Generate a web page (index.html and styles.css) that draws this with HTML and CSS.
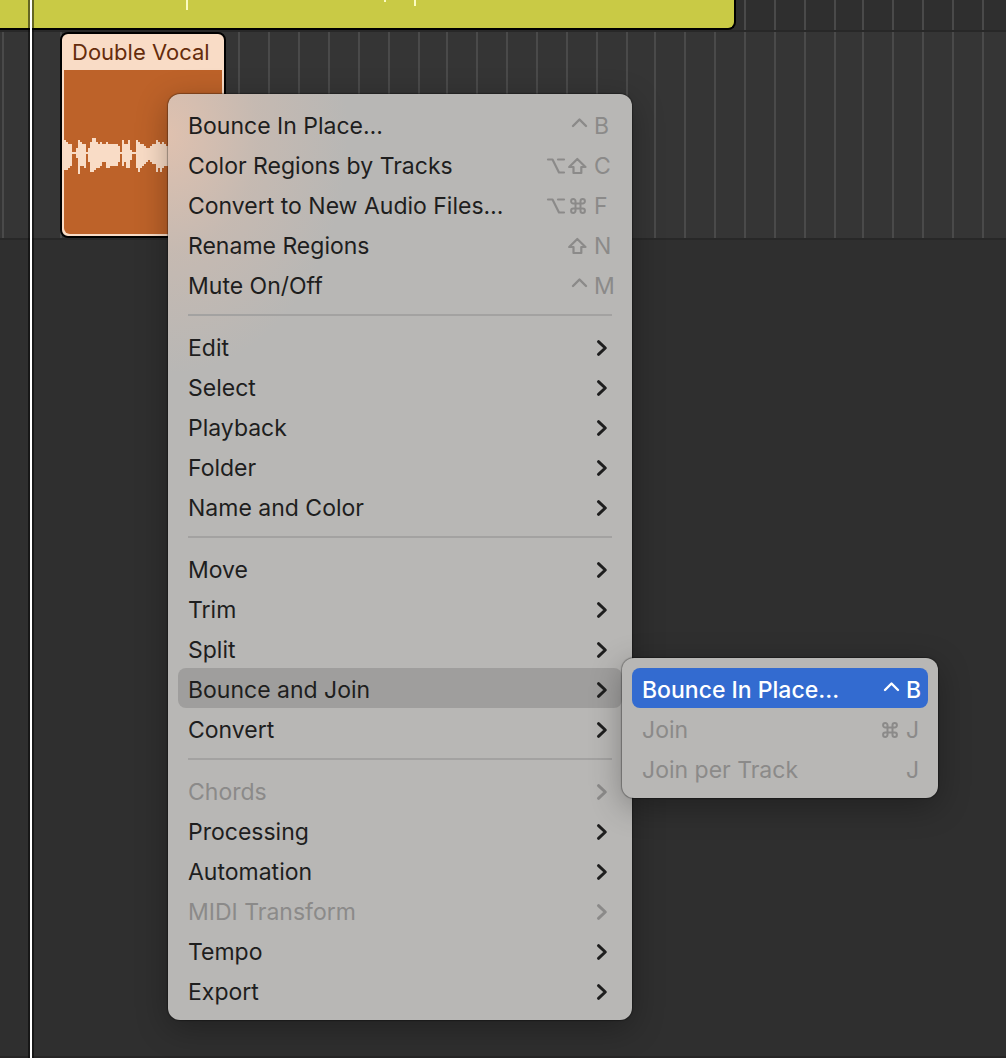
FILE: index.html
```html
<!DOCTYPE html>
<html lang="en">
<head>
<meta charset="utf-8">
<title>Tracks</title>
<link rel="stylesheet" href="styles.css">
</head>
<body>
<svg class="defs" aria-hidden="true">
  <symbol id="chevron" viewBox="0 0 20 20"><path d="M6.500 3.700l6.800 6.300-6.800 6.300" stroke-width="3"/></symbol>
  <symbol id="control" viewBox="0 0 20 20"><path d="M5 10l6.500-6.500 6.500 6.500" stroke-width="2.400"/></symbol>
  <symbol id="option" viewBox="0 0 20 20"><path d="M2 3.500h4.500l6.500 13H18M12 3.500h6" stroke-width="2.200"/></symbol>
  <symbol id="shift" viewBox="0 0 20 20"><path d="M9.300 3L1.200 11H5.500v6h7.800v-6h4.200z" stroke-width="2.200"/></symbol>
  <symbol id="command" viewBox="0 0 20 20"><path d="M7.500 7.500h5v5h-5zM7.500 7.500H5.300a2.200 2.200 0 1 1 2.200-2.200zM12.500 7.500V5.300a2.200 2.200 0 1 1 2.200 2.200zM12.500 12.500h2.200a2.200 2.200 0 1 1-2.200 2.200zM7.500 12.500v2.200a2.200 2.200 0 1 1-2.200-2.200z"/></symbol>
</svg>

<main class="arrange">
  <section class="lane lane-top">
    <div class="region region-yellow">
      <svg class="peaks" width="734" height="12" aria-hidden="true"><path d="M187 0V10M385 0V2M415 0V6"/></svg>
    </div>
  </section>
  <section class="lane lane-vocal">
    <div class="region region-vocal">
      <h2 class="region-name">Double Vocal</h2>
      <div class="region-body">
        <svg class="wave" viewBox="0 0 158 44" aria-hidden="true"><path d="M1 6V36M3 8V36M5 10V34M7 10V32M9 18V20M11 18V20M13 14V24M15 6V40M17 8V32M19 10V32M21 10V34M23 18V20M25 14V28M27 8V38M29 4V38M31 4V36M33 8V34M35 10V34M37 8V32M39 10V28M41 10V28M43 8V34M45 10V34M47 10V32M49 10V32M51 10V32M53 10V32M55 12V28M57 18V20M59 6V32M61 10V28M63 10V34M65 6V34M67 16V26M69 18V20M71 18V20M73 6V34M75 8V38M77 10V34M79 10V32M81 12V30M83 14V28M85 14V26M87 12V28M89 10V30M91 10V30M93 6V38M95 8V34M97 10V38M99 8V34M101 10V32M103 12V32"/></svg>
      </div>
    </div>
  </section>
  <section class="empty"></section>
  <div class="playhead"></div>
</main>

<ul class="menu context" role="menu">
  <li><button class="item">Bounce In Place…<span class="keys"><svg><use href="#control"/></svg><kbd>B</kbd></span></button></li>
  <li><button class="item">Color Regions by Tracks<span class="keys"><svg><use href="#option"/></svg><svg><use href="#shift"/></svg><kbd>C</kbd></span></button></li>
  <li><button class="item">Convert to New Audio Files…<span class="keys"><svg><use href="#option"/></svg><svg><use href="#command"/></svg><kbd>F</kbd></span></button></li>
  <li><button class="item">Rename Regions<span class="keys"><svg><use href="#shift"/></svg><kbd>N</kbd></span></button></li>
  <li><button class="item">Mute On/Off<span class="keys"><svg><use href="#control"/></svg><kbd>M</kbd></span></button></li>
  <li class="separator" role="separator"></li>
  <li><button class="item">Edit<svg><use href="#chevron"/></svg></button></li>
  <li><button class="item">Select<svg><use href="#chevron"/></svg></button></li>
  <li><button class="item">Playback<svg><use href="#chevron"/></svg></button></li>
  <li><button class="item">Folder<svg><use href="#chevron"/></svg></button></li>
  <li><button class="item">Name and Color<svg><use href="#chevron"/></svg></button></li>
  <li class="separator" role="separator"></li>
  <li><button class="item">Move<svg><use href="#chevron"/></svg></button></li>
  <li><button class="item">Trim<svg><use href="#chevron"/></svg></button></li>
  <li><button class="item">Split<svg><use href="#chevron"/></svg></button></li>
  <li class="parent">
    <button class="item open" aria-expanded="true">Bounce and Join<svg><use href="#chevron"/></svg></button>
    <ul class="menu submenu" role="menu">
      <li><button class="item selected">Bounce In Place…<span class="keys"><svg><use href="#control"/></svg><kbd>B</kbd></span></button></li>
      <li><button class="item" disabled>Join<span class="keys"><svg><use href="#command"/></svg><kbd>J</kbd></span></button></li>
      <li><button class="item" disabled>Join per Track<span class="keys"><kbd>J</kbd></span></button></li>
    </ul>
  </li>
  <li><button class="item">Convert<svg><use href="#chevron"/></svg></button></li>
  <li class="separator" role="separator"></li>
  <li><button class="item" disabled>Chords<svg><use href="#chevron"/></svg></button></li>
  <li><button class="item">Processing<svg><use href="#chevron"/></svg></button></li>
  <li><button class="item">Automation<svg><use href="#chevron"/></svg></button></li>
  <li><button class="item" disabled>MIDI Transform<svg><use href="#chevron"/></svg></button></li>
  <li><button class="item">Tempo<svg><use href="#chevron"/></svg></button></li>
  <li><button class="item">Export<svg><use href="#chevron"/></svg></button></li>
</ul>
</body>
</html>
```

FILE: styles.css
```css
* {
  box-sizing: border-box;
}

body {
  margin: 0;
  background: #2f2f2f;
  font-family: Inter, "Liberation Sans", sans-serif;
  font-size: 23px;
  color: #1e1e1e;
}

ul {
  list-style: none;
  margin: 0;
  padding: 0;
}

.defs {
  position: absolute;
  width: 0;
  height: 0;
}

/* Arrange area */
.arrange {
  position: relative;
  display: flex;
  flex-direction: column;
  min-height: 100vh;
  overflow: hidden;
}

.lane {
  border-bottom: 2px solid #282828;
  background-image: repeating-linear-gradient(90deg, #4a4a4a 0 2px, transparent 2px 30px);
  background-size: 208px 100%;
  background-position: 30px 0;
}

.lane-top {
  height: 32px;
}

.lane-vocal {
  height: 208px;
  padding-left: 60px;
  background-color: #353535;
}

.empty {
  flex: 1;
  border-bottom: 2px solid #272626;
}

.region {
  border: 2px solid #000;
}

.region-yellow {
  width: 736px;
  height: 30px;
  border-width: 0 2px 2px 0;
  border-radius: 0 0 8px 0;
  background: #c9ca45;
}

.peaks {
  display: block;
  stroke: #fbfbc0;
  stroke-width: 2;
}

.region-vocal {
  display: flex;
  flex-direction: column;
  width: 166px;
  height: 206px;
  padding: 0 2px 2px;
  border-radius: 8px;
  background: #f9dcc6;
}

.region-name {
  margin: 0;
  padding-left: 8px;
  font-size: 22px;
  font-weight: 400;
  line-height: 36px;
  color: #652c0c;
  white-space: nowrap;
}

.region-body {
  flex: 1;
  padding-top: 64px;
  border-radius: 0 0 6px 6px;
  background: #bd6229;
}

.wave {
  display: block;
  width: 100%;
  stroke: #f9dcc6;
  stroke-width: 2;
  shape-rendering: crispEdges;
}

.playhead {
  position: absolute;
  top: 0;
  bottom: 0;
  left: 28px;
  width: 6px;
  border: solid rgba(0, 0, 0, 0.5);
  border-width: 0 2px;
  background: #fff;
  background-clip: padding-box;
}

/* Menus */
.menu {
  position: absolute;
  padding: 10px;
  border-radius: 12px;
  background-color: #b8b7b5;
  box-shadow: 0 0 1px 1px rgba(0, 0, 0, 0.3), 0 8px 32px rgba(0, 0, 0, 0.3);
}

.context {
  top: 94px;
  left: 168px;
  width: 464px;
  background-image: radial-gradient(ellipse 180px 240px at 0 40px, #dfc1af, rgba(206, 187, 175, 0.6) 50%, rgba(184, 183, 181, 0));
}

.parent {
  position: relative;
}

.submenu {
  top: -10px;
  left: 100%;
  width: 316px;
}

.item {
  display: flex;
  align-items: center;
  justify-content: space-between;
  width: 100%;
  height: 40px;
  padding: 4px 10px 0;
  border: 0;
  border-radius: 8px;
  background: none;
  color: inherit;
  font: inherit;
  text-align: left;
  white-space: nowrap;
}

.item svg {
  width: 20px;
  height: 20px;
  fill: none;
  stroke: currentColor;
  stroke-width: 2;
  stroke-linecap: round;
  stroke-linejoin: round;
}

.item:disabled {
  color: #8b8a89;
}

.keys {
  display: flex;
  align-items: center;
  gap: 2px;
  color: #8b8a89;
}

.keys kbd {
  width: 18px;
  margin-left: 4px;
  font: inherit;
}

.submenu .item {
  padding-right: 4px;
}

.item.open {
  background: #9f9e9d;
}

.item.selected {
  background: #336bd0;
  color: #fff;
  font-weight: 500;
}

.selected .keys {
  color: inherit;
}

.separator {
  height: 22px;
  padding: 10px;
}

.separator::before {
  content: "";
  display: block;
  height: 2px;
  background: #a3a2a1;
}
```
